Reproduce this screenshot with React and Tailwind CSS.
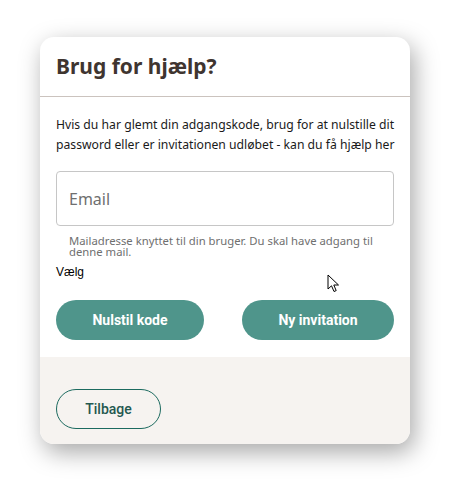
export default function App() {
  return (
    <div className="relative w-[455px] h-[488px] bg-white pt-[37px] pl-[40px]">
      <div className="w-[370px] rounded-[14px] overflow-hidden bg-white shadow-[4px_8px_24px_rgba(0,0,0,0.35)]">
        <div className="h-[60px] px-4 flex items-center border-b border-[#cbc3be]">
          <h2 className="text-[21px] font-bold text-[#3f3530] font-['Noto_Sans',sans-serif]">Brug for hjælp?</h2>
        </div>
        <div className="px-4 pt-[18px] pb-[17px] font-['Noto_Sans',sans-serif]">
          <p className="text-[12.2px] leading-[20px] text-[#1a1a1a] whitespace-nowrap">
            Hvis du har glemt din adgangskode, brug for at nulstille dit
            <br />
            password eller er invitationen udløbet - kan du få hjælp her
          </p>
          <input
            type="text"
            placeholder="Email"
            className="mt-[16px] w-full h-[55px] rounded-[4px] border border-[#c6c6c6] px-[12px] text-[16px] text-[#333] placeholder:text-[#6f6f6f] outline-none"
          />
          <p className="mt-[9px] pl-[13px] pr-[8px] text-[11.3px] leading-[11px] text-[#6f6f6f]">
            Mailadresse knyttet til din bruger. Du skal have adgang til denne mail.
          </p>
          <div className="mt-[6px] text-[12px] text-black font-['Liberation_Sans',sans-serif]">Vælg</div>
          <div className="mt-[19px] flex justify-between font-['Roboto',sans-serif]">
            <button className="w-[148px] h-[40px] rounded-full bg-[#4f958b] text-white text-[14px] font-bold">Nulstil kode</button>
            <button className="w-[152px] h-[40px] rounded-full bg-[#4f958b] text-white text-[14px] font-bold">Ny invitation</button>
          </div>
        </div>
        <div className="bg-[#f6f3f0] px-4 pt-[32px] pb-[15px] font-['Roboto',sans-serif]">
          <button className="w-[105px] h-[40px] rounded-full border border-[#1c6a5f] text-[#23584f] text-[14px] font-medium">Tilbage</button>
        </div>
      </div>
      <svg className="absolute left-[327px] top-[274px]" width="13" height="20" viewBox="0 0 13 20">
        <path d="M1 1 L1 15 L4.5 11.8 L7 17.5 L9.2 16.6 L6.8 11 L11.5 11 Z" fill="white" stroke="black" strokeWidth="1" strokeLinejoin="round" />
      </svg>
    </div>
  )
}
